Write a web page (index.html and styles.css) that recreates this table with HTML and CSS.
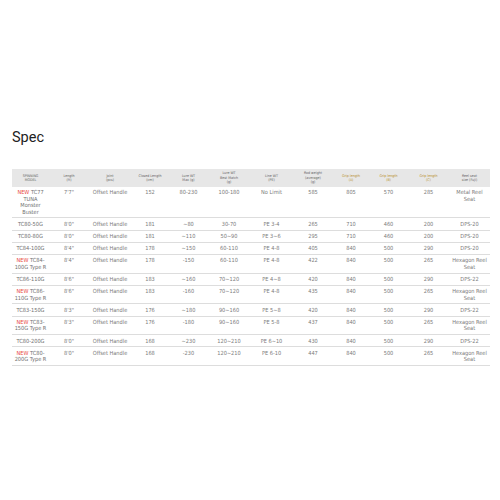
FILE: index.html
```html
<!DOCTYPE html>
<html>
<head>
<meta charset="utf-8">
<link rel="stylesheet" href="styles.css">
</head>
<body>
<div class="page">
  <h2 class="title">Spec</h2>
  <table class="spec">
    <colgroup>
      <col class="c1"><col class="c2"><col class="c3"><col class="c4"><col class="c5"><col class="c6">
      <col class="c7"><col class="c8"><col class="c9"><col class="c10"><col class="c11"><col class="c12">
    </colgroup>
    <thead>
      <tr>
        <th>SPINNING<br>MODEL</th>
        <th>Length<br>(ft)</th>
        <th>Joint<br>(pcs)</th>
        <th>Closed Length<br>(cm)</th>
        <th>Lure WT<br>Max (g)</th>
        <th>Lure WT<br>Best Match<br>(g)</th>
        <th>Line WT<br>(PE)</th>
        <th>Rod weight<br>(average)<br>(g)</th>
        <th class="gold">Grip length<br>(A)</th>
        <th class="gold">Grip length<br>(B)</th>
        <th class="gold">Grip length<br>(C)</th>
        <th>Reel seat<br>size (Fuji)</th>
      </tr>
    </thead>
    <tbody>
      <tr><td class="model"><span class="new">NEW</span> TC77<br>TUNA<br>Monster<br>Buster</td><td>7'7"</td><td>Offset Handle</td><td>152</td><td>80-230</td><td>100-180</td><td>No Limit</td><td>585</td><td>805</td><td>570</td><td>285</td><td>Metal Reel<br>Seat</td></tr>
      <tr><td class="model">TC80-50G</td><td>8'0"</td><td>Offset Handle</td><td>181</td><td>~80</td><td>30-70</td><td>PE 3-4</td><td>265</td><td>710</td><td>460</td><td>200</td><td>DPS-20</td></tr>
      <tr><td class="model">TC80-80G</td><td>8'0"</td><td>Offset Handle</td><td>181</td><td>~110</td><td>50~90</td><td>PE 3~6</td><td>295</td><td>710</td><td>460</td><td>200</td><td>DPS-20</td></tr>
      <tr><td class="model">TC84-100G</td><td>8'4"</td><td>Offset Handle</td><td>178</td><td>~150</td><td>60-110</td><td>PE 4-8</td><td>405</td><td>840</td><td>500</td><td>290</td><td>DPS-20</td></tr>
      <tr><td class="model"><span class="new">NEW</span> TC84-<br>100G Type R</td><td>8'4"</td><td>Offset Handle</td><td>178</td><td>-150</td><td>60-110</td><td>PE 4-8</td><td>422</td><td>840</td><td>500</td><td>265</td><td>Hexagon Reel<br>Seat</td></tr>
      <tr><td class="model">TC86-110G</td><td>8'6"</td><td>Offset Handle</td><td>183</td><td>~160</td><td>70~120</td><td>PE 4~8</td><td>420</td><td>840</td><td>500</td><td>290</td><td>DPS-22</td></tr>
      <tr><td class="model"><span class="new">NEW</span> TC86-<br>110G Type R</td><td>8'6"</td><td>Offset Handle</td><td>183</td><td>-160</td><td>70~120</td><td>PE 4-8</td><td>435</td><td>840</td><td>500</td><td>265</td><td>Hexagon Reel<br>Seat</td></tr>
      <tr><td class="model">TC83-150G</td><td>8'3"</td><td>Offset Handle</td><td>176</td><td>~180</td><td>90~160</td><td>PE 5~8</td><td>420</td><td>840</td><td>500</td><td>290</td><td>DPS-22</td></tr>
      <tr><td class="model"><span class="new">NEW</span> TC83-<br>150G Type R</td><td>8'3"</td><td>Offset Handle</td><td>176</td><td>-180</td><td>90~160</td><td>PE 5-8</td><td>437</td><td>840</td><td>500</td><td>265</td><td>Hexagon Reel<br>Seat</td></tr>
      <tr><td class="model">TC80-200G</td><td>8'0"</td><td>Offset Handle</td><td>168</td><td>~230</td><td>120~210</td><td>PE 6~10</td><td>430</td><td>840</td><td>500</td><td>290</td><td>DPS-22</td></tr>
      <tr><td class="model"><span class="new">NEW</span> TC80-<br>200G Type R</td><td>8'0"</td><td>Offset Handle</td><td>168</td><td>-230</td><td>120~210</td><td>PE 6-10</td><td>447</td><td>840</td><td>500</td><td>265</td><td>Hexagon Reel<br>Seat</td></tr>
    </tbody>
  </table>
</div>
</body>
</html>
```
FILE: styles.css
```css
html, body {
  margin: 0;
  padding: 0;
  background: #ffffff;
}
.page {
  padding: 128px 10px 0 12px;
}
.title {
  margin: 0 0 22px 0;
  font-family: Roboto, "Liberation Sans", sans-serif;
  font-weight: 400;
  font-size: 14.5px;
  line-height: 19px;
  color: #222222;
}
.spec {
  width: 478px;
  border-collapse: collapse;
  table-layout: fixed;
  font-family: "DejaVu Sans Condensed", "DejaVu Sans", sans-serif;
  color: #7a7a7a;
}
.c1 { width: 37px; }
.c2 { width: 40px; }
.c3 { width: 42px; }
.c4 { width: 38px; }
.c5 { width: 39px; }
.c6 { width: 42px; }
.c7 { width: 43px; }
.c8 { width: 40px; }
.c9 { width: 36px; }
.c10 { width: 39px; }
.c11 { width: 41px; }
.c12 { width: 41px; }
.spec th {
  background: #e7e7e7;
  font-weight: 400;
  font-size: 3.6px;
  line-height: 4.4px;
  color: #666666;
  height: 18px;
  padding: 0;
  text-align: center;
  vertical-align: middle;
}
.spec th.gold {
  color: #b8912f;
}
.spec td {
  font-size: 5.6px;
  line-height: 6.4px;
  padding: 2.4px 0 2.4px 0;
  text-align: center;
  vertical-align: top;
  border-bottom: 1px solid #dddddd;
  white-space: nowrap;
}
.spec td.model {
  color: #6f6f6f;
}
.new {
  color: #e8453c;
}
```
